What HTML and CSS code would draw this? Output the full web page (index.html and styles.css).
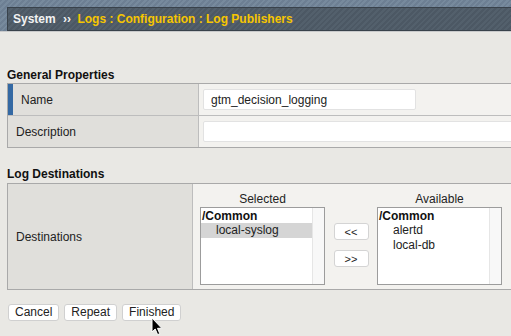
FILE: index.html
```html
<html>
<head>
    <title>Log Publishers</title>
    <link rel="stylesheet" href="styles.css">
</head>
<body>
<div class="header">
    <div class="crumb">
        <span class="crumb-root">System</span>
        <span class="crumb-sep">&rsaquo;&rsaquo;</span>
        <span class="crumb-path">Logs : Configuration : Log Publishers</span>
    </div>
</div>

<div class="page">
    <h2 class="first">General Properties</h2>
    <div class="props">
        <div class="row">
            <div class="label label-req">Name</div>
            <div class="value"><input class="text name" type="text" value="gtm_decision_logging"></div>
        </div>
        <div class="row">
            <div class="label">Description</div>
            <div class="value"><input class="text desc" type="text" value=""></div>
        </div>
    </div>

    <h2 class="second">Log Destinations</h2>
    <div class="props dest">
        <div class="row">
            <div class="label">Destinations</div>
            <div class="value">
                <div class="picker">
                    <div class="pick-col">
                        <div class="pick-title">Selected</div>
                        <div class="listbox">
                            <div class="items">
                                <div class="group">/Common</div>
                                <div class="item selected">local-syslog</div>
                            </div>
                            <div class="track"></div>
                        </div>
                    </div>
                    <div class="movers">
                        <button class="mini">&lt;&lt;</button>
                        <button class="mini">&gt;&gt;</button>
                    </div>
                    <div class="pick-col">
                        <div class="pick-title">Available</div>
                        <div class="listbox">
                            <div class="items">
                                <div class="group">/Common</div>
                                <div class="item">alertd</div>
                                <div class="item">local-db</div>
                            </div>
                            <div class="track"></div>
                        </div>
                    </div>
                </div>
            </div>
        </div>
    </div>

    <div class="actions">
        <button class="btn">Cancel</button>
        <button class="btn">Repeat</button>
        <button class="btn">Finished</button>
    </div>
</div>

<!-- mouse pointer over the Finished button -->
<svg class="pointer" width="12" height="19" viewBox="0 0 12 19">
    <path d="M1 1 L1 15 L4.2 12 L6.6 17.6 L8.8 16.7 L6.5 11.3 L10.8 11.3 Z" fill="#000" stroke="#fff" stroke-width="1" stroke-linejoin="round"/>
</svg>
</body>
</html>
```

FILE: styles.css
```css
html, body {
    margin: 0;
    overflow: hidden;
}

body {
    background: #e9e8e4;
    font: 12px "Liberation Sans", Arial, sans-serif;
    color: #222;
    position: relative;
    width: 511px;
    height: 336px;
}

.header {
    padding: 7px 0 0 7px;
    background: repeating-linear-gradient(135deg, #6d7f93 0, #6d7f93 2px, #778a9d 2px, #778a9d 4px);
    border-bottom: 1px solid #c9cacb;
}

.crumb {
    height: 22px;
    line-height: 22px;
    padding-left: 5px;
    background: repeating-linear-gradient(135deg, #4c5864 0, #4c5864 2px, #53606c 2px, #53606c 4px);
    border: 1px solid #39424b;
    border-right: none;
    font-weight: bold;
    font-size: 12px;
}

.crumb-root {
    color: #f2f2f2;
}

.crumb-sep {
    color: #f2f2f2;
    margin: 0 3px 0 4px;
}

.crumb-path {
    color: #f7c600;
}

.page {
    padding: 0 0 0 7px;
}

h2 {
    font-size: 12px;
    font-weight: bold;
    line-height: 14px;
    color: #111;
}

h2.first {
    margin: 36px 0 1px 0;
}

h2.second {
    margin: 19px 0 2px 0;
}

.props {
    border: 1px solid #a9a9a9;
    border-right: none;
    overflow: hidden;
}

.row {
    display: grid;
    grid-template-columns: 191px 1fr;
    height: 31px;
}

.row + .row {
    border-top: 1px solid #bdbdbd;
}

.label {
    background: #e0dfdb;
    border-right: 1px solid #bdbdbd;
    padding-left: 8px;
    display: flex;
    align-items: center;
    color: #222;
}

.label-req {
    border-left: 5px solid #3469a3;
    padding-left: 8px;
}

.value {
    background: #f3f2ef;
    padding-left: 4px;
    display: flex;
    align-items: center;
    overflow: hidden;
}

.text {
    height: 21px;
    border: 1px solid #e2e2e2;
    border-radius: 2px;
    background: #fff;
    font: 12px "Liberation Sans", Arial, sans-serif;
    color: #222;
    padding: 0 0 0 7px;
    box-sizing: border-box;
}

.name {
    width: 213px;
}

.desc {
    flex: 0 0 330px;
}

.dest .row {
    grid-template-columns: 185px 1fr;
    height: 105px;
}

.dest .value {
    padding-left: 7px;
    align-items: flex-start;
}

.picker {
    display: flex;
    padding-top: 8px;
}

.pick-col {
    width: 125px;
}

.pick-title {
    text-align: center;
    line-height: 15px;
    height: 15px;
    color: #222;
}

.listbox {
    height: 78px;
    border: 1px solid #9c9c9c;
    background: #fff;
    box-sizing: border-box;
    display: flex;
}

.items {
    flex: 1;
    padding-top: 1px;
}

.track {
    width: 11px;
    background: #f8f8f8;
    border-left: 1px solid #e6e6e6;
}

.group {
    font-weight: bold;
    line-height: 14px;
    padding-left: 1px;
    color: #111;
}

.item {
    line-height: 15px;
    padding-left: 15px;
    color: #222;
}

.item.selected {
    background: #d5d5d5;
}

.movers {
    width: 52px;
    display: flex;
    flex-direction: column;
    align-items: center;
    padding-top: 31px;
    gap: 10px;
}

.mini {
    width: 35px;
    height: 17px;
    background: #fff;
    border: 1px solid #d4d4d4;
    border-radius: 3px;
    font: 11px "Liberation Sans", Arial, sans-serif;
    color: #222;
    padding: 0;
}

.actions {
    display: flex;
    gap: 5px;
    padding-top: 14px;
    padding-left: 1px;
}

.btn {
    height: 17px;
    background: #fff;
    border: 1px solid #d0d0d0;
    border-radius: 3px;
    font: 12px "Liberation Sans", Arial, sans-serif;
    color: #222;
    padding: 0 6px;
    line-height: 15px;
}

.pointer {
    position: absolute;
    left: 151px;
    top: 317px;
}
```
